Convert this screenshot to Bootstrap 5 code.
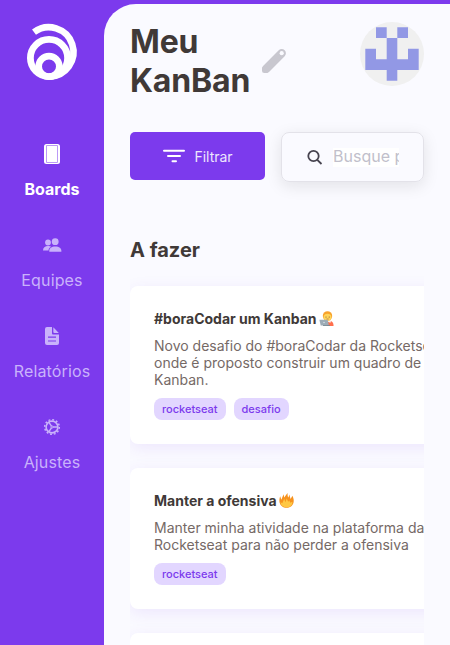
<!DOCTYPE html>
<html lang="pt-br">
<head>
<meta charset="utf-8">
<meta name="viewport" content="width=device-width, initial-scale=1">
<title>Meu KanBan</title>
<link rel="stylesheet" href="https://cdn.jsdelivr.net/npm/bootstrap@5.3.0/dist/css/bootstrap.min.css">
<style>
body{font-family:Inter,sans-serif;background:#7c3aed;color:#403937;line-height:1.2}
.side{width:104px;padding-top:20px}
.side .nav{margin-top:57px;gap:33px}
.side .nav-link{color:#c9b2fb;font-size:16px;font-weight:400;letter-spacing:.14px;line-height:20px;height:58px}
.side .nav-link.active{color:#fff;font-weight:700;letter-spacing:0}
.side .nav-link svg{margin-bottom:14px}
.side svg{display:block;flex-shrink:0}
.board{margin-top:4px;border-top-left-radius:32px;background:#fafaff;padding:18px 26px 0;min-width:0}
h1{font-size:32px;line-height:39px;font-weight:700;width:120px;letter-spacing:-.15px}
.tools{margin-top:32px;gap:16px}
.filter{width:135px;height:48px;background:#7c3aed;border:0;border-radius:5px;font-size:14px;color:#ede5fd;--bs-btn-hover-bg:#6d28d9}
.finder{width:143px;height:50px;border:1px solid #e3e2e9;border-radius:8px;padding:0 24px;box-shadow:0 4px 16px rgba(22,22,22,.1)}
.finder input{width:66px;height:19px;font-size:16px;border:0;padding:0;outline:0;background:#fff;margin-left:9px}
.finder input::placeholder{color:#c1bfcb;opacity:1}
h2{font-size:20px;line-height:24px;font-weight:700;margin:56px 0 0}
.lane{overflow:hidden;padding-top:24px;gap:24px}
.task{width:340px;border:0;border-radius:8px;padding:24px;box-shadow:0 4px 16px rgba(124,58,237,.1);flex-shrink:0}
.task h3{font-size:14px;line-height:17px;font-weight:700;margin:0 0 10px;white-space:nowrap;gap:2.500px}
.task p{font-size:14px;line-height:17px;color:#756966;margin:0 0 10px;white-space:nowrap}
.tag{background:#e2d6ff;color:#7c3aed;font-size:11px;line-height:14px;font-weight:500;padding:4px 8px;border-radius:8px}
</style>
<script src="https://cdn.jsdelivr.net/npm/bootstrap@5.3.0/dist/js/bootstrap.bundle.min.js"></script>
</head>
<body>
<div class="d-flex vh-100 overflow-hidden">
<aside class="side d-flex flex-column align-items-center flex-shrink-0">
  <svg width="58" height="64" viewBox="23 20 58 64" fill="none" stroke="#fff" aria-label="Logo">
    <circle cx="49" cy="58" r="18.6" stroke-width="6.8"/>
    <circle cx="49" cy="66.4" r="10.3" stroke-width="6.6"/>
    <path d="M34 32.2A24.7 24.7 0 1 1 49 76.7" stroke-width="6.6"/>
  </svg>
  <nav class="nav flex-column w-100">
    <a href="#" class="nav-link active p-0 d-flex flex-column align-items-center">
      <svg width="24" height="24" viewBox="0 0 24 24"><rect x="4" y="3" width="16" height="20" rx="2.5" fill="#fff"/><path d="M6.500 4.500v17M17.500 4.500v17M6.500 4.500h11M6.500 21.500h11" fill="none" stroke="#b38df5" stroke-width=".9"/></svg>
      <span>Boards</span></a>
    <a href="#" class="nav-link p-0 d-flex flex-column align-items-center">
      <svg width="24" height="24" viewBox="0 -1 24 24" fill="#c9b2fb"><circle cx="8" cy="9.500" r="2.900"/><path d="M3 17.500c0-3 2-4.500 5-4.500 1.500 0 2.500.3 3.200.7-2 1-2.700 2.400-2.700 3.800z"/><circle cx="15.200" cy="8.700" r="3.400"/><path d="M9.300 18.800c-.5-3.600 2.300-5.400 6-5.400s6.500 1.800 6.100 5.400z"/></svg>
      <span>Equipes</span></a>
    <a href="#" class="nav-link p-0 d-flex flex-column align-items-center">
      <svg width="24" height="24" viewBox="0 0 24 24" fill="#c9b2fb"><path d="M7 4h5v6.200c0 .8.500 1.300 1.300 1.300H19V20a2 2 0 0 1-2 2H7a2 2 0 0 1-2-2V6a2 2 0 0 1 2-2z"/><path d="M13.300 4.200 18.800 10h-4.500a1 1 0 0 1-1-1z"/><path d="M8 14.200h8M8 18h8" stroke="#7c3aed" stroke-width="1.200"/></svg>
      <span>Relatórios</span></a>
    <a href="#" class="nav-link p-0 d-flex flex-column align-items-center">
      <svg width="24" height="24" viewBox="0 0 24 24" fill="none" stroke="#c9b2fb"><circle cx="12" cy="13" r="5.900" stroke-width="1.600"/><circle cx="12" cy="13" r="7.300" stroke-width="1.500" stroke-dasharray="1.910 1.910"/><path d="M13 13h5M11.500 12.200 8.700 8.100M11.500 13.800 8.700 17.900" stroke-width="1.400"/><circle cx="12" cy="13" r="1.100" stroke-width="1"/></svg>
      <span>Ajustes</span></a>
  </nav>
</aside>
<main class="board flex-grow-1 d-flex flex-column">
  <header class="d-flex justify-content-between align-items-start">
    <div class="d-flex align-items-center gap-2">
      <h1 class="m-0">Meu KanBan</h1>
      <svg width="32" height="32" viewBox="0 0 32 32" aria-label="Editar"><path d="M8.300 23.700 23.700 8.300" stroke="#c8c7cf" stroke-width="8.400" stroke-linecap="round"/><rect x="4" y="21.500" width="6.500" height="6.500" rx="2.300" fill="#c8c7cf"/><circle cx="23.700" cy="8.200" r="2.100" fill="#fafaff"/></svg>
    </div>
    <svg width="64" height="64" viewBox="0 0 64 64" aria-label="Perfil"><circle cx="32" cy="32" r="32" fill="#f0f0f0"/><path fill="#9298e5" d="M16 5.300h10.700V16H16zM37.300 5.300H48V16H37.300zM26.700 16h10.600v21.300H48V26.700h10.700V48H37.300v10.700H26.700V48H5.300V26.700H16v10.600h10.700z"/></svg>
  </header>
  <div class="tools d-flex align-items-start">
    <button class="filter btn d-flex align-items-center justify-content-center gap-2 p-0 flex-shrink-0"><svg width="24" height="24" viewBox="0 0 24 24" stroke="#fff" stroke-width="2" stroke-linecap="round"><path d="M2 6.700h20M6 12h12M10.500 17.300h3.500"/></svg><span>Filtrar</span></button>
    <label class="finder d-flex align-items-center">
      <svg width="18" height="18" viewBox="0 0 18 18" fill="none" stroke="#46434f" stroke-width="1.800"><circle cx="7.500" cy="8" r="5.200"/><path d="m11.300 11.800 4.200 4.200"/></svg>
      <input type="text" placeholder="Busque por cards, assuntos ou responsáveis">
    </label>
  </div>
  <h2>A fazer</h2>
  <section class="lane d-flex flex-column flex-grow-1">
    <article class="task card">
      <h3 class="d-flex align-items-center">#boraCodar um Kanban
        <svg width="15" height="15" viewBox="0 0 15 15" role="img" aria-label="Programador"><path d="M8 15V12l3-2.200c2 .5 3.600 2 3.600 5.200z" fill="#ff6f4d"/><path d="m9.500 10.500 1.700 1.500.8-2-1-.6z" fill="#f4f4f4"/><ellipse cx="8.500" cy="5" rx="4.700" ry="4.800" fill="#f8a22b"/><ellipse cx="8.500" cy="6.200" rx="3.900" ry="3.500" fill="#ffd45a"/><circle cx="7" cy="6" r=".5" fill="#6b4226"/><circle cx="10.200" cy="6" r=".5" fill="#6b4226"/><path d="M7.500 8h2.200" stroke="#a85c2b" stroke-width=".6"/><path d="M.4 8.800h8.300l1.200 5.800H1.700z" fill="#9cabb6"/><path d="M4 14h7v.9H4z" fill="#778892"/><circle cx="5" cy="11.500" r=".8" fill="#d7e0e5"/></svg></h3>
      <p>Novo desafio do #boraCodar da Rocketseat,<br>onde é proposto construir um quadro de<br>Kanban.</p>
      <div class="d-flex gap-2"><span class="tag">rocketseat</span><span class="tag">desafio</span></div>
    </article>
    <article class="task card">
      <h3 class="d-flex align-items-center">Manter a ofensiva
        <svg width="15" height="15" viewBox="0 0 15 15" role="img" aria-label="Fogo"><path d="M1.200 3.200 2.300 6.800 4.600 1.300 5.200 4.600 8.500 0 8.700 3.300 9.500 4.500 10.300 1.600 11.600 6 13.400 2.800C14.800 5.500 15 7.500 14.500 9.700c-.8 3.100-3.600 5.100-7 5.100S1.300 12.600.6 9.500C.2 7.500.4 5.200 1.200 3.200z" fill="#f6921e"/><path d="M1.600 9.300l1.700.9 1.900-4.500 1.200 3.600 1.300-3.800 1.500 3.300 1.100-1.300 1 2.200 2.100-.9c.3 3.500-2.300 5.500-5.700 5.500-3.300 0-5.900-1.700-6.100-5z" fill="#ffc843"/></svg></h3>
      <p>Manter minha atividade na plataforma da<br>Rocketseat para não perder a ofensiva</p>
      <div class="d-flex gap-2"><span class="tag">rocketseat</span></div>
    </article>
    <article class="task card"><div class="py-4"></div></article>
  </section>
</main>
</div>
</body>
</html>
